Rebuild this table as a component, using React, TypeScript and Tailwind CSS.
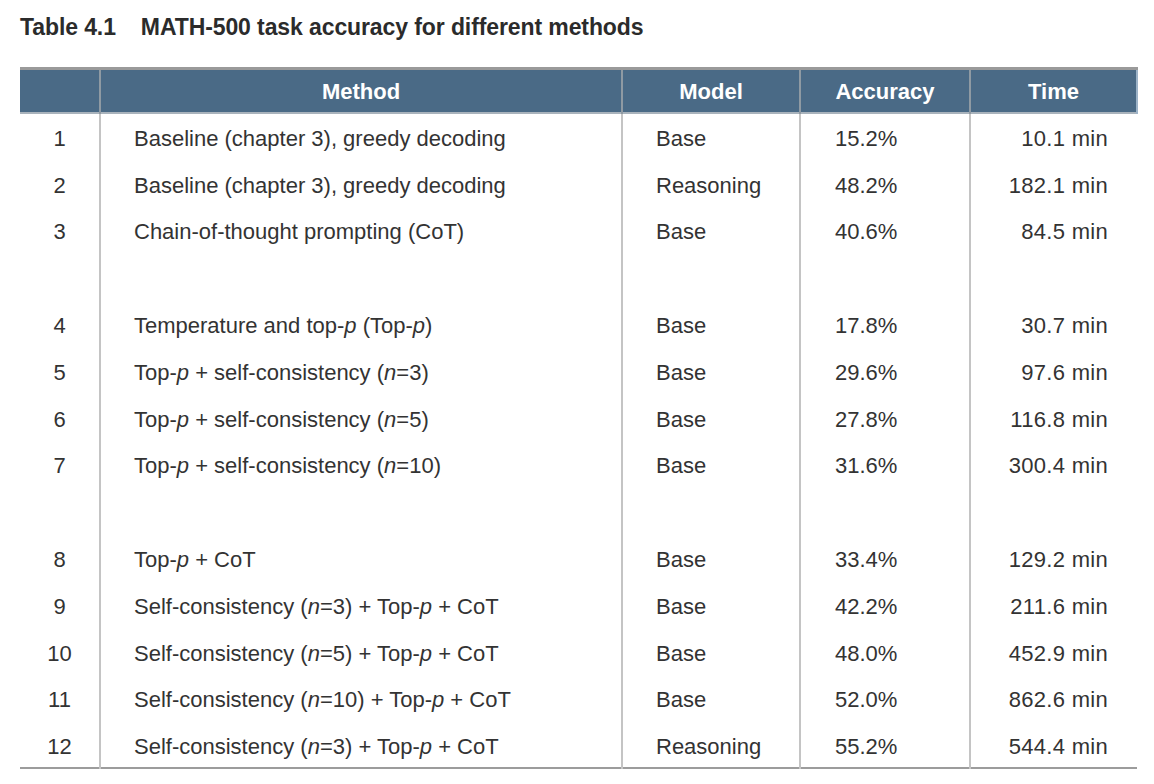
type Row = {
    num?: number
    method?: React.ReactNode
    model?: string
    accuracy?: string
    time?: string
}

const P = () => <i>p</i>
const N = () => <i>n</i>

const rows: Row[] = [
    { num: 1, method: 'Baseline (chapter 3), greedy decoding', model: 'Base', accuracy: '15.2%', time: '10.1 min' },
    { num: 2, method: 'Baseline (chapter 3), greedy decoding', model: 'Reasoning', accuracy: '48.2%', time: '182.1 min' },
    { num: 3, method: 'Chain-of-thought prompting (CoT)', model: 'Base', accuracy: '40.6%', time: '84.5 min' },
    {},
    { num: 4, method: <>Temperature and top-<P /> (Top-<P />)</>, model: 'Base', accuracy: '17.8%', time: '30.7 min' },
    { num: 5, method: <>Top-<P /> + self-consistency (<N />=3)</>, model: 'Base', accuracy: '29.6%', time: '97.6 min' },
    { num: 6, method: <>Top-<P /> + self-consistency (<N />=5)</>, model: 'Base', accuracy: '27.8%', time: '116.8 min' },
    { num: 7, method: <>Top-<P /> + self-consistency (<N />=10)</>, model: 'Base', accuracy: '31.6%', time: '300.4 min' },
    {},
    { num: 8, method: <>Top-<P /> + CoT</>, model: 'Base', accuracy: '33.4%', time: '129.2 min' },
    { num: 9, method: <>Self-consistency (<N />=3) + Top-<P /> + CoT</>, model: 'Base', accuracy: '42.2%', time: '211.6 min' },
    { num: 10, method: <>Self-consistency (<N />=5) + Top-<P /> + CoT</>, model: 'Base', accuracy: '48.0%', time: '452.9 min' },
    { num: 11, method: <>Self-consistency (<N />=10) + Top-<P /> + CoT</>, model: 'Base', accuracy: '52.0%', time: '862.6 min' },
    { num: 12, method: <>Self-consistency (<N />=3) + Top-<P /> + CoT</>, model: 'Reasoning', accuracy: '55.2%', time: '544.4 min' },
]

export default function App() {
    return (
        <div className="w-[1154px] h-[784px] bg-white text-[#333333] font-['Liberation_Sans',Arial,sans-serif] pt-[14px] pl-[20px]">
            <h1 className="text-[23px] font-bold leading-[26px] text-[#2b2b2b] flex gap-[25px] tracking-[-0.1px]">
                <span>Table 4.1</span>
                <span>MATH-500 task accuracy for different methods</span>
            </h1>

            <table className="mt-[27px] w-[1117px] border-collapse table-fixed border-t-[3px] border-t-[#9a9a9a] border-b-2 border-b-[#9c9c9c]">
                <colgroup>
                    <col className="w-[80px]" />
                    <col className="w-[522px]" />
                    <col className="w-[178px]" />
                    <col className="w-[170px]" />
                    <col className="w-[167px]" />
                </colgroup>
                <thead>
                    <tr className="h-[44px] bg-[#4a6a86] text-white text-[22px] font-bold border-b-2 border-b-[#a9b3bc]">
                        <th className="border-r-2 border-r-[#8f9aa3] pt-[2px]"></th>
                        <th className="border-r-2 border-r-[#8f9aa3] pt-[2px]">Method</th>
                        <th className="border-r-2 border-r-[#8f9aa3] pt-[2px]">Model</th>
                        <th className="border-r-2 border-r-[#8f9aa3] pt-[2px]">Accuracy</th>
                        <th className="border-r-2 border-r-[#9db3c8] pt-[2px]">Time</th>
                    </tr>
                </thead>
                <tbody className="text-[22px]">
                    {rows.map((row, i) => (
                        <tr key={i} className="h-[46.8px]">
                            <td className="text-center border-r-2 border-r-[#c4c4c4] pt-[5px]">{row.num}</td>
                            <td className="pl-[33px] border-r-2 border-r-[#c4c4c4] whitespace-nowrap pt-[5px]">{row.method}</td>
                            <td className="pl-[33px] border-r-2 border-r-[#c4c4c4] pt-[5px]">{row.model}</td>
                            <td className="pl-[34px] border-r-2 border-r-[#c4c4c4] pt-[5px]">{row.accuracy}</td>
                            <td className="text-right pr-[29px] pt-[5px] tracking-[0.3px]">{row.time}</td>
                        </tr>
                    ))}
                </tbody>
            </table>
        </div>
    )
}
